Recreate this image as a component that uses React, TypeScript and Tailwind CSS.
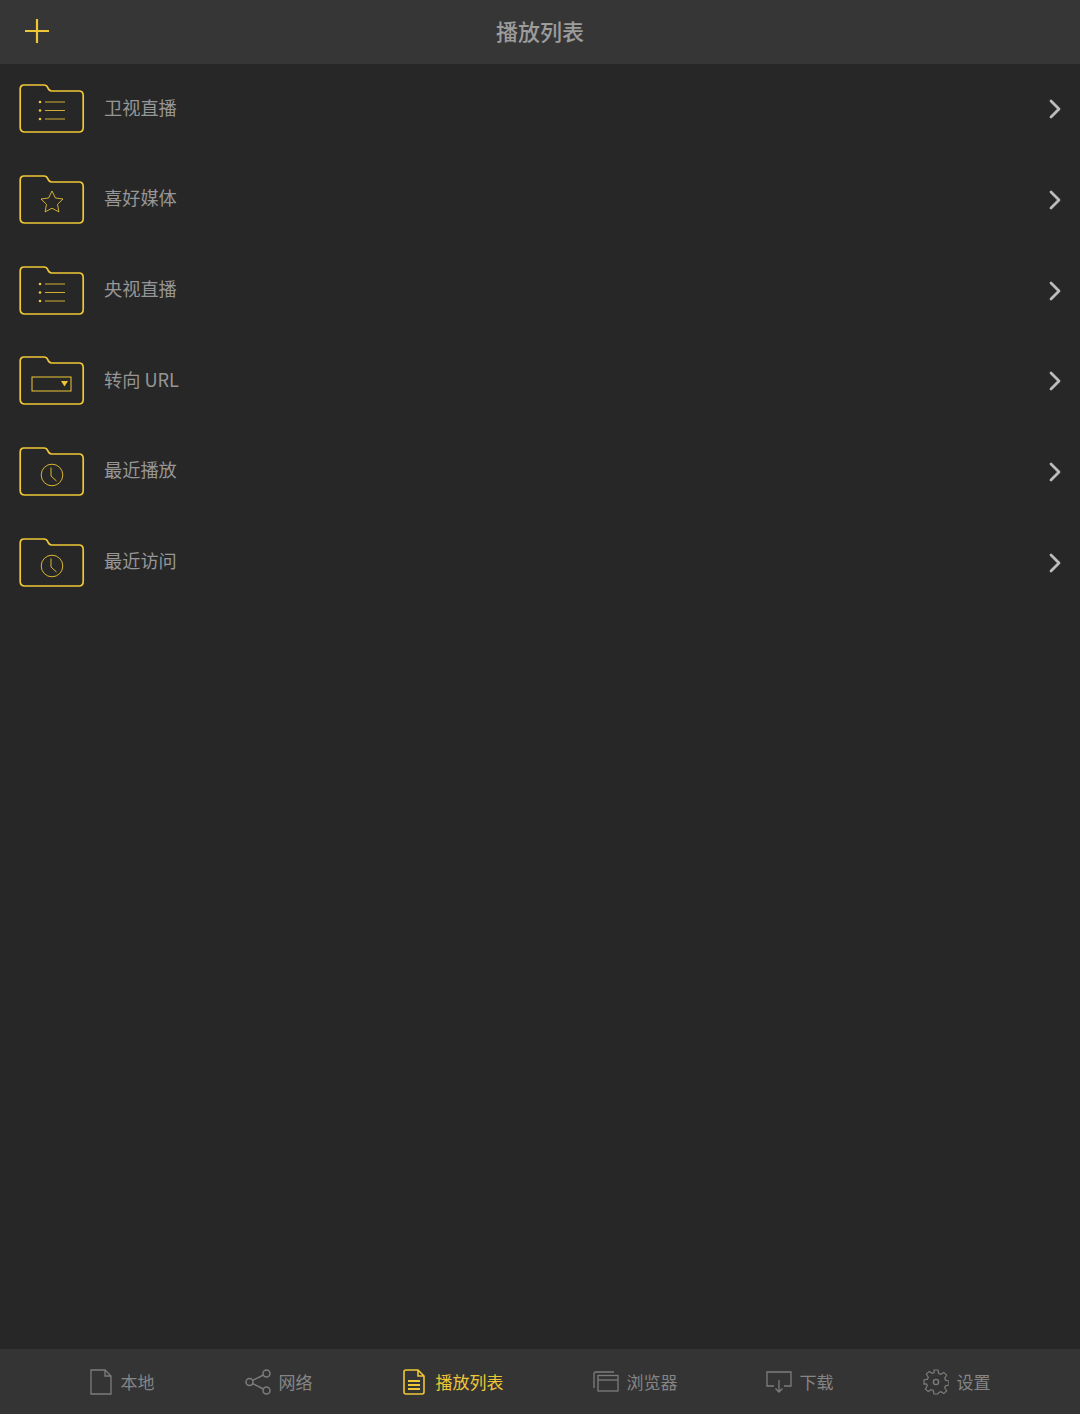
import React from 'react'
import { ChevronRight } from 'lucide-react'

const YELLOW = '#efc736'
const FONT = '"Noto Sans CJK SC", sans-serif'

type Glyph = 'list' | 'star' | 'url' | 'clock'

const ROWS: { label: string; glyph: Glyph }[] = [
  { label: '卫视直播', glyph: 'list' },
  { label: '喜好媒体', glyph: 'star' },
  { label: '央视直播', glyph: 'list' },
  { label: '转向 URL', glyph: 'url' },
  { label: '最近播放', glyph: 'clock' },
  { label: '最近访问', glyph: 'clock' },
]

function FolderIcon({ glyph }: { glyph: Glyph }) {
  return (
    <svg width="66" height="50" viewBox="0 0 66 50" fill="none" stroke={YELLOW} className="shrink-0">
      <path
        d="M5 1h20c2 0 3 .8 3.700 2.500C29.300 5.200 30.200 7 32.500 7H60c2.500 0 4.200 1.700 4.200 4.500V43.500c0 2.800-1.400 4.500-4.200 4.500H6c-3 0-4.800-1.700-4.800-4.500V5C1.200 2.500 2.800 1 5 1z"
        strokeWidth="1.700"
      />
      {glyph === 'list' && (
        <g strokeWidth="1">
          <path d="M26 18h20M26 26.500h20M26 35h20" opacity="0.85" />
          <circle cx="21" cy="18" r="1.300" fill={YELLOW} stroke="none" />
          <circle cx="21" cy="26.500" r="1.300" fill={YELLOW} stroke="none" />
          <circle cx="21" cy="35" r="1.300" fill={YELLOW} stroke="none" />
        </g>
      )}
      {glyph === 'star' && (
        <path
          d="M33 16l3.400 7 7.600 1-5.500 5.300 1.400 7.600-6.900-3.700-6.900 3.700 1.400-7.600-5.500-5.300 7.600-1z"
          strokeWidth="1"
          opacity="0.85"
        />
      )}
      {glyph === 'url' && (
        <g>
          <rect x="13" y="21" width="39" height="14" strokeWidth="1" />
          <path d="M42 25h7l-3.500 5.500z" fill={YELLOW} stroke="none" />
        </g>
      )}
      {glyph === 'clock' && (
        <g strokeWidth="1" opacity="0.9">
          <circle cx="33" cy="28" r="10.800" />
          <path d="M32 20.500v8.500l5.500 5" />
        </g>
      )}
    </svg>
  )
}

function TabIcon({ name }: { name: string }) {
  const color = name === 'list' ? YELLOW : '#7c7c7c'
  if (name === 'file') {
    return (
      <svg width="22" height="26" viewBox="0 0 22 26" fill="none" stroke={color} strokeWidth="1.300">
        <path d="M1 1h14l6 6v18H1zM15 1v6h6" />
      </svg>
    )
  }
  if (name === 'share') {
    return (
      <svg width="26" height="26" viewBox="0 0 26 26" fill="none" stroke={color} strokeWidth="1.500">
        <circle cx="4.500" cy="13" r="3.500" />
        <circle cx="21.500" cy="4.500" r="3.500" />
        <circle cx="21.500" cy="21.500" r="3.500" />
        <path d="M7.700 11.400l10.700-5.400M7.700 14.600l10.700 5.400" />
      </svg>
    )
  }
  if (name === 'list') {
    return (
      <svg width="22" height="26" viewBox="0 0 22 26" fill="none" stroke={color} strokeWidth="1.600">
        <path d="M3 1h12l6 6v16c0 1.300-.7 2-2 2H3c-1.300 0-2-.7-2-2V3c0-1.300.7-2 2-2zM15 1v6h6" />
        <path d="M5 12h12M5 16h12M5 20h12" strokeWidth="1.800" />
      </svg>
    )
  }
  if (name === 'browser') {
    return (
      <svg width="26" height="21" viewBox="0 0 26 21" fill="none" stroke={color} strokeWidth="1.300">
        <path d="M1 17V3c0-1.300.7-2 2-2h18" />
        <rect x="5" y="4.500" width="20" height="15.500" />
        <path d="M5 9h20" />
      </svg>
    )
  }
  if (name === 'download') {
    return (
      <svg width="26" height="22" viewBox="0 0 26 22" fill="none" stroke={color} strokeWidth="1.300">
        <path d="M8 15H1V1h24v14h-7" />
        <path d="M13 9v12M9.500 17.500L13 21l3.500-3.500" />
      </svg>
    )
  }
  return (
    <svg width="26" height="26" viewBox="0 0 26 26" fill="none" stroke={color} strokeWidth="1.200">
      <path d="M11 1h4l.8 3.500 2 .8 3-1.900 2.800 2.800-1.900 3 .8 2 3.500.8v4l-3.500.8-.8 2 1.900 3-2.800 2.800-3-1.900-2 .8L15 25h-4l-.8-3.500-2-.8-3 1.900-2.800-2.800 1.900-3-.8-2L1 15v-4l3.500-.8.8-2-1.900-3 2.800-2.800 3 1.900 2-.8z" />
      <circle cx="13" cy="13" r="2.600" strokeWidth="1.400" />
    </svg>
  )
}

const TABS = [
  { icon: 'file', label: '本地', cls: 'gap-[9px]' },
  { icon: 'share', label: '网络', cls: 'ml-[90px] gap-[8px]' },
  { icon: 'list', label: '播放列表', cls: 'ml-[90px] gap-[11px]' },
  { icon: 'browser', label: '浏览器', cls: 'ml-[89px] gap-[8px]' },
  { icon: 'download', label: '下载', cls: 'ml-[88px] gap-[8px]' },
  { icon: 'gear', label: '设置', cls: 'ml-[89px] gap-[8px]' },
]

export default function App() {
  return (
    <div className="flex h-[1414px] w-[1080px] flex-col overflow-hidden bg-[#272727]" style={{ fontFamily: FONT }}>
      <header className="relative flex h-[64px] shrink-0 items-center justify-center bg-[#363636]">
        <svg width="26" height="26" viewBox="0 0 26 26" stroke={YELLOW} strokeWidth="2.200" className="absolute left-[24px] top-[18px]">
          <path d="M13 1v24M1 13h24" />
        </svg>
        <h1 className="mb-[4px] text-[22px] leading-none font-medium text-[#9c9c9c]">播放列表</h1>
      </header>

      <main className="flex-1">
        {ROWS.map((row) => (
          <div key={row.label} className="flex h-[90.67px] items-center pr-[9px] pl-[19px]">
            <FolderIcon glyph={row.glyph} />
            <span className="mb-[5px] ml-[19px] flex-1 text-[18.200px] leading-none text-[#969696]">{row.label}</span>
            <ChevronRight size={32} strokeWidth={2.100} className="text-[#bcbcbc]" />
          </div>
        ))}
      </main>

      <nav className="flex h-[65px] shrink-0 items-center justify-center bg-[#343434]">
        {TABS.map((tab) => (
          <div key={tab.label} className={`flex items-center ${tab.cls}`}>
            <TabIcon name={tab.icon} />
            <span className={`text-[17px] leading-none ${tab.icon === 'list' ? 'text-[#efc736]' : 'text-[#858585]'}`}>
              {tab.label}
            </span>
          </div>
        ))}
      </nav>
    </div>
  )
}
